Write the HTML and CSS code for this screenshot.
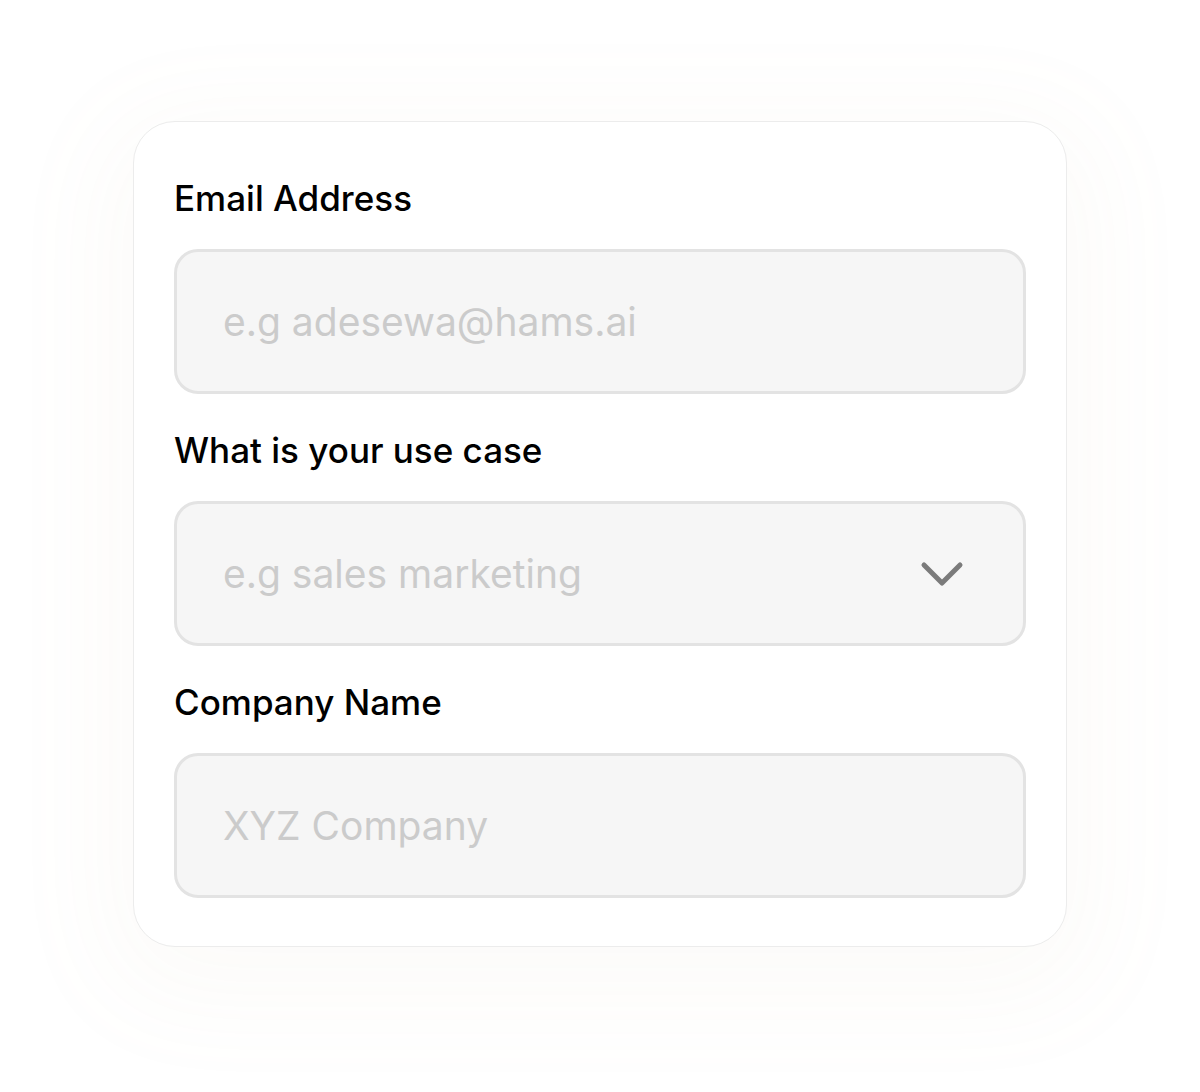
FILE: index.html
```html
<!DOCTYPE html>
<html lang="en">
<head>
<meta charset="utf-8">
<title>Form</title>
<link rel="stylesheet" href="styles.css">
</head>
<body>
<main class="page">
  <form class="card">
    <div class="field">
      <label class="label" for="email">Email Address</label>
      <div class="input-box">
        <input class="input" id="email" type="text" placeholder="e.g adesewa@hams.ai">
      </div>
    </div>
    <div class="field">
      <label class="label" for="usecase">What is your use case</label>
      <div class="input-box select-box">
        <input class="input" id="usecase" type="text" placeholder="e.g sales marketing">
        <svg class="chevron" width="46" height="28" viewBox="0 0 46 28" aria-hidden="true">
          <polyline points="5,5 23,23 41,5" fill="none" stroke="#7b7b7b" stroke-width="5" stroke-linecap="round" stroke-linejoin="round"/>
        </svg>
      </div>
    </div>
    <div class="field">
      <label class="label" for="company">Company Name</label>
      <div class="input-box">
        <input class="input" id="company" type="text" placeholder="XYZ Company">
      </div>
    </div>
  </form>
</main>
</body>
</html>
```

FILE: styles.css
```css
* { box-sizing: border-box; }

html, body {
  margin: 0;
  padding: 0;
  background: #ffffff;
}

body {
  font-family: "Inter", "Noto Sans", "Liberation Sans", sans-serif;
  width: 1200px;
  height: 1092px;
  overflow: hidden;
}

.page {
  display: flex;
  justify-content: center;
  padding-top: 121px;
}

.card {
  width: 934px;
  background: #ffffff;
  border: 1px solid #ececec;
  border-radius: 42px;
  padding: 55px 40px 48px 40px;
  box-shadow: 0 24px 110px 30px rgba(190, 160, 110, 0.045);
  display: flex;
  flex-direction: column;
  gap: 35px;
}

.field {
  display: flex;
  flex-direction: column;
  gap: 30px;
}

.label {
  font-size: 35px;
  line-height: 42px;
  font-weight: 500;
  color: #000000;
  letter-spacing: 0;
}

.input-box {
  height: 145px;
  background: #f6f6f6;
  border: 3px solid #e3e3e3;
  border-radius: 24px;
  display: flex;
  align-items: center;
  padding: 0 58px 0 46px;
}

.input {
  flex: 1;
  min-width: 0;
  border: 0;
  outline: 0;
  background: transparent;
  font-family: inherit;
  font-size: 39px;
  font-weight: 400;
  color: #333;
  padding: 0;
}

.input::placeholder {
  color: #cbcbcb;
  opacity: 1;
}

.chevron {
  flex: none;
  display: block;
}
```
